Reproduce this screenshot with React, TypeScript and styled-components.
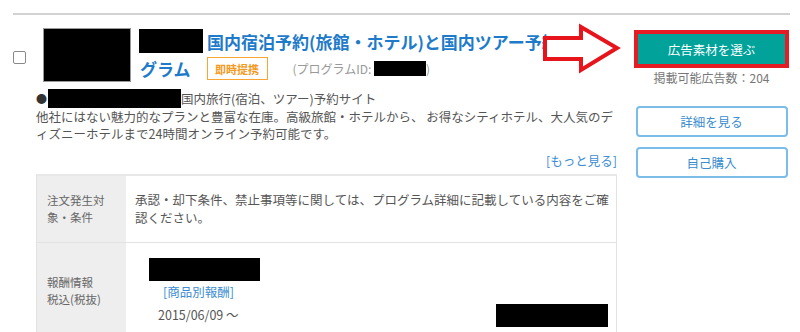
import styled, { createGlobalStyle } from 'styled-components';

const GlobalStyle = createGlobalStyle`
  body {
    margin: 0;
    background: #fff;
    font-family: "Noto Sans CJK JP", "Noto Sans", sans-serif;
    color: #555;
  }
`;

const Page = styled.div`
  padding: 13px 10px 0 13px;
`;

const Card = styled.div`
  width: 777px;
  border-top: 2px solid #d2d2d2;
`;

const Row = styled.div`
  position: relative;
  display: flex;
  gap: 16px;
  padding-top: 13px;
`;

const Main = styled.div`
  width: 604px;
  display: flex;
  flex-direction: column;
`;

const Head = styled.div`
  display: flex;
  align-items: flex-start;
`;

const Check = styled.input.attrs({ type: 'checkbox' })`
  appearance: none;
  flex: none;
  width: 13px;
  height: 13px;
  margin: 23px 17px 0 0;
  border: 1px solid #8a8a8a;
  border-radius: 2px;
  background: #fff;
`;

// redacted areas in the screenshot
const Mask = styled.span<{ $w: number; $h: number }>`
  display: inline-block;
  flex: none;
  width: ${p => p.$w}px;
  height: ${p => p.$h}px;
  background: #000;
`;

const Logo = styled.div`
  flex: none;
  width: 88px;
  height: 54px;
  margin-right: 8px;
  box-sizing: border-box;
  background: #000;
  border: 1px solid #999;
`;

const TitleBlock = styled.div`
  display: flex;
  flex-direction: column;
  min-width: 0;
`;

const TitleLine = styled.div`
  display: flex;
  align-items: flex-end;
  width: 410px;
  height: 25px;
  overflow: hidden;
  white-space: nowrap;
`;

const TitleText = styled.span<{ $indent?: number }>`
  margin-left: ${p => p.$indent ?? 0}px;
  color: #1e7bc9;
  font-size: 17px;
  font-weight: bold;
  line-height: 22px;
`;

const SubLine = styled.div`
  display: flex;
  align-items: center;
  height: 23px;
  margin-top: 4px;
  white-space: nowrap;
`;

const Badge = styled.span`
  display: flex;
  align-items: center;
  justify-content: center;
  width: 61px;
  height: 23px;
  margin-left: 16px;
  box-sizing: border-box;
  border: 1px solid #f8a633;
  color: #f39a1e;
  font-size: 11px;
  font-weight: bold;
`;

const ProgramId = styled.span`
  display: flex;
  align-items: center;
  margin-left: 25px;
  color: #999;
  font-size: 12px;
`;

const Desc = styled.div`
  margin: 7px 0 0 23px;
  font-size: 12.5px;
  line-height: 17px;
  color: #555;
  white-space: nowrap;
`;

const DescLead = styled.div`
  display: flex;
  align-items: center;
  height: 19px;

  .dot {
    color: #333;
    font-size: 11px;
    margin-right: 1px;
  }
`;

const More = styled.div`
  margin-top: 10px;
  text-align: right;
  font-size: 12.5px;
  line-height: 18px;
  color: #3d8ed3;
`;

const Table = styled.div`
  width: 581px;
  margin: 4px 0 0 23px;
  box-sizing: border-box;
  border: 1px solid #e2e2e2;
  border-top: 2px solid #e8e8e8;
`;

const TRow = styled.div`
  display: flex;

  & + & {
    border-top: 1px solid #e2e2e2;
  }
`;

const HeadCell = styled.div`
  flex: none;
  display: flex;
  align-items: center;
  width: 89px;
  box-sizing: border-box;
  padding-left: 10px;
  background: #eeeeee;
  color: #666;
  font-size: 11.5px;
  line-height: 17.5px;
`;

const Cell = styled.div`
  flex: 1;
  padding: 15px 4px 15px 9px;
  font-size: 12.5px;
  line-height: 18px;
  color: #555;
  white-space: nowrap;
`;

const RewardCell = styled.div`
  flex: 1;
  display: flex;
  justify-content: space-between;
  align-items: flex-end;
  padding: 15px 8px 15px 23px;
  font-size: 12.5px;
  line-height: 18px;
`;

const RewardCol = styled.div`
  display: flex;
  flex-direction: column;
  align-items: flex-start;
`;

const RewardLink = styled.span`
  margin: 2px 0 0 14px;
  color: #3d8ed3;
`;

const RewardDate = styled.span`
  margin: 5px 0 0 9px;
  color: #555;
`;

const Side = styled.aside`
  width: 157px;
  display: flex;
  flex-direction: column;
  align-items: center;
  padding-top: 2px;
`;

const Highlight = styled.div`
  width: 155px;
  box-sizing: border-box;
  border: 4px solid #e51c23;
`;

const PrimaryButton = styled.button`
  display: block;
  width: 100%;
  height: 30px;
  border: none;
  background: #00a29a;
  color: #fff;
  font-family: inherit;
  font-size: 12.5px;
`;

const Count = styled.div`
  margin-top: 2px;
  font-size: 12px;
  line-height: 16px;
  color: #777;
`;

const OutlineButton = styled.button`
  width: 152px;
  height: 31px;
  margin-top: 20px;
  border: 2px solid #7bbce9;
  border-radius: 4px;
  background: #fff;
  color: #3a8dd0;
  font-family: inherit;
  font-size: 12.5px;

  & + & {
    margin-top: 10px;
  }
`;

const Arrow = styled.svg`
  position: absolute;
  left: 527px;
  top: 7px;
`;

export default function App() {
  return (
    <Page>
      <GlobalStyle />
      <Card>
        <Row>
          <Main>
            <Head>
              <Check />
              <Logo />
              <TitleBlock>
                <TitleLine>
                  <Mask $w={64} $h={24} />
                  <TitleText $indent={4}>国内宿泊予約(旅館・ホテル)と国内ツアー予約プロ</TitleText>
                </TitleLine>
                <SubLine>
                  <TitleText $indent={1}>グラム</TitleText>
                  <Badge>即時提携</Badge>
                  <ProgramId>
                    (プログラムID:&nbsp;
                    <Mask $w={52} $h={15} />)
                  </ProgramId>
                </SubLine>
              </TitleBlock>
            </Head>

            <Desc>
              <DescLead>
                <span className="dot">●</span>
                <Mask $w={133} $h={19} />
                <span>国内旅行(宿泊、ツアー)予約サイト</span>
              </DescLead>
              <div>他社にはない魅力的なプランと豊富な在庫。高級旅館・ホテルから、 お得なシティホテル、大人気のデ</div>
              <div>ィズニーホテルまで24時間オンライン予約可能です。</div>
            </Desc>

            <More>[もっと見る]</More>

            <Table>
              <TRow>
                <HeadCell>
                  注文発生対
                  <br />
                  象・条件
                </HeadCell>
                <Cell>
                  承認・却下条件、禁止事項等に関しては、プログラム詳細に記載している内容をご確
                  <br />
                  認ください。
                </Cell>
              </TRow>
              <TRow>
                <HeadCell>
                  報酬情報
                  <br />
                  税込(税抜)
                </HeadCell>
                <RewardCell>
                  <RewardCol>
                    <Mask $w={111} $h={23} />
                    <RewardLink>[商品別報酬]</RewardLink>
                    <RewardDate>2015/06/09 ～</RewardDate>
                  </RewardCol>
                  <Mask $w={112} $h={23} style={{ marginBottom: -3 }} />
                </RewardCell>
              </TRow>
            </Table>
          </Main>

          <Side>
            <Highlight>
              <PrimaryButton>広告素材を選ぶ</PrimaryButton>
            </Highlight>
            <Count>掲載可能広告数：204</Count>
            <OutlineButton>詳細を見る</OutlineButton>
            <OutlineButton>自己購入</OutlineButton>
          </Side>

          <Arrow width="82" height="54" viewBox="0 0 82 54">
            <polygon
              points="5,16 41,16 41,5 77,26 41,48 41,37 5,37"
              fill="#fff"
              stroke="#e8141c"
              strokeWidth="4"
              strokeLinejoin="miter"
            />
          </Arrow>
        </Row>
      </Card>
    </Page>
  );
}
